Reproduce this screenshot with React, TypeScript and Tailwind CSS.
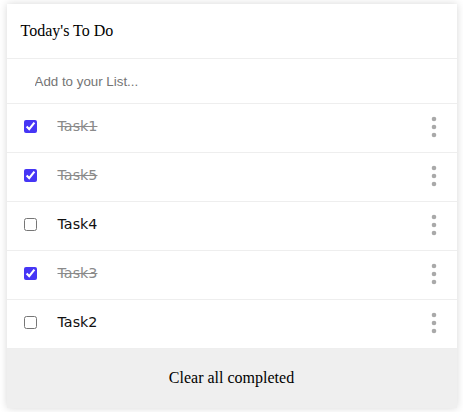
import { useState } from 'react';

type Task = { id: number; title: string; done: boolean };

const initialTasks: Task[] = [
  { id: 1, title: 'Task1', done: true },
  { id: 5, title: 'Task5', done: true },
  { id: 4, title: 'Task4', done: false },
  { id: 3, title: 'Task3', done: true },
  { id: 2, title: 'Task2', done: false },
];

function KebabIcon() {
  return (
    <svg width="6" height="22" viewBox="0 0 6 22" className="fill-[#a9a9a9]">
      <circle cx="3" cy="3" r="2.3" />
      <circle cx="3" cy="11" r="2.3" />
      <circle cx="3" cy="19" r="2.3" />
    </svg>
  );
}

export default function App() {
  const [tasks, setTasks] = useState(initialTasks);

  const toggle = (id: number) =>
    setTasks((prev) => prev.map((t) => (t.id === id ? { ...t, done: !t.done } : t)));

  return (
    <div className="pt-1 bg-white min-h-screen">
      <div className="w-[450px] mx-auto bg-white shadow-[0_0_8px_rgba(0,0,0,0.16)]">
        {/* Header */}
        <div className="h-[55px] flex items-center px-[14px] border-b border-[#eeeeee]">
          <h1 className="font-['Liberation_Serif',serif] text-[16px] text-black">Today's To Do</h1>
        </div>

        {/* New task input */}
        <div className="h-[45px] flex items-center border-b border-[#eeeeee]">
          <input
            type="text"
            placeholder="Add to your List..."
            className="w-full h-full pl-[28px] font-['Liberation_Sans',Arial,sans-serif] text-[13.33px] outline-none placeholder:text-[#757575]"
          />
        </div>

        {/* Task list */}
        {tasks.map((task) => (
          <div key={task.id} className="h-[49px] flex items-center pl-[17px] pr-[20px] pb-[3px] border-b border-[#eeeeee]">
            <input
              type="checkbox"
              checked={task.done}
              onChange={() => toggle(task.id)}
              className="w-[13px] h-[13px] m-0 accent-[#4636f5]"
            />
            <span
              className={
                "ml-[21px] flex-1 font-['DejaVu_Sans',sans-serif] text-[14.3px] " +
                (task.done ? 'line-through text-[#8a8a8a]' : 'text-[#111111]')
              }
            >
              {task.title}
            </span>
            <KebabIcon />
          </div>
        ))}

        {/* Footer */}
        <button className="w-full h-[59px] pb-[2px] bg-[#efefef] font-['Liberation_Serif',serif] text-[16px] text-black">
          Clear all completed
        </button>
      </div>
    </div>
  );
}
